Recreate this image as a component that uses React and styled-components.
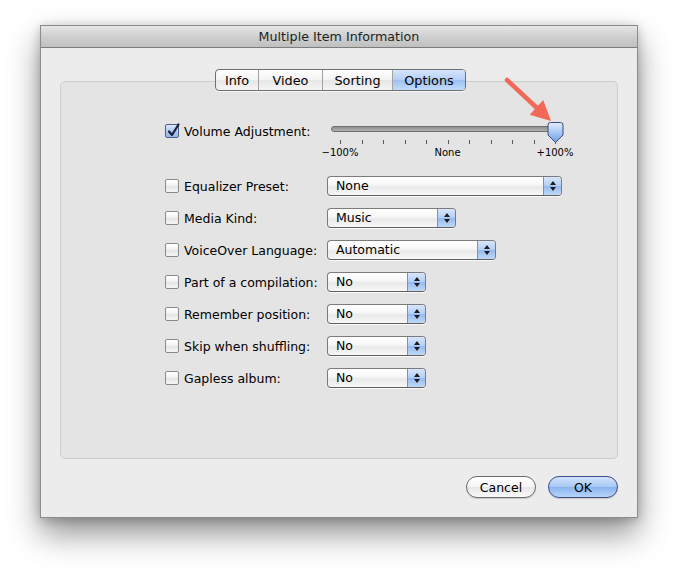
import React from "react";
import styled, { createGlobalStyle } from "styled-components";

const GlobalStyle = createGlobalStyle`
  html, body { margin: 0; padding: 0; background: #fff; }
  body { font-family: "DejaVu Sans", "Lucida Grande", sans-serif; color: #000; }
`;

const Page = styled.div`
  position: relative;
  width: 678px;
  height: 573px;
  padding: 25px 0 0 40px;
  box-sizing: border-box;
  overflow: hidden;
`;

const Window = styled.div`
  width: 598px;
  height: 493px;
  box-sizing: border-box;
  display: flex;
  flex-direction: column;
  background: #ececec;
  border: 1px solid #8c8c8c;
  box-shadow: 0 16px 30px rgba(0, 0, 0, 0.42), 0 2px 10px rgba(0, 0, 0, 0.22);
`;

const TitleBar = styled.div`
  height: 21px;
  display: flex;
  align-items: center;
  justify-content: center;
  font-size: 12.7px;
  color: #1e1e1e;
  background: linear-gradient(#e6e6e6, #cfcfcf 50%, #c0c0c0);
  border-bottom: 1px solid #7d7d7d;
`;

const Body = styled.div`
  flex: 1;
  display: flex;
  flex-direction: column;
  padding: 21px 19px 19px 19px;
`;

const TabBar = styled.div`
  align-self: center;
  position: relative;
  z-index: 1;
  display: grid;
  grid-template-columns: 42px 64px 70px 73px;
  height: 22px;
  box-sizing: border-box;
  margin-left: 3px;
  border: 1px solid #6f6f6f;
  border-radius: 4px;
  overflow: hidden;
  background: linear-gradient(#ffffff, #f3f3f3 50%, #e6e6e6 51%, #f4f4f4);
  box-shadow: 0 1px 0 rgba(255, 255, 255, 0.7);
`;

const Tab = styled.div`
  display: flex;
  align-items: center;
  justify-content: center;
  font-size: 12.8px;
  border-left: ${(p) => (p.$first ? "none" : "1px solid #a3a3a3")};
  background: ${(p) =>
    p.$active
      ? "linear-gradient(#d6e5fb, #b4cff4 50%, #9cc0f0 51%, #c3dbfa)"
      : "transparent"};
`;

const GroupBox = styled.div`
  flex: 1;
  margin-top: -10px;
  background: #e4e4e4;
  border: 1px solid #cdcdcd;
  border-radius: 5px;
  padding: 40px 0 0 104px;
  display: flex;
  flex-direction: column;
`;

const VolumeRow = styled.div`
  display: flex;
  align-items: flex-start;
  margin-bottom: 18px;
`;

const Row = styled.div`
  display: flex;
  align-items: center;
  height: 20px;
  margin-bottom: 12px;
`;

const LabelCell = styled.label`
  width: 162px;
  height: ${(p) => p.$h || 20}px;
  display: flex;
  align-items: center;
  gap: 5px;
  font-size: 12.5px;
  white-space: nowrap;
`;

const Box = styled.span`
  position: relative;
  width: 14px;
  height: 14px;
  box-sizing: border-box;
  flex: none;
  border: 1px solid #8a8a8a;
  border-radius: 2px;
  background: ${(p) =>
    p.$checked
      ? "linear-gradient(#dce8fa, #a9c7f1 55%, #93b8ee)"
      : "linear-gradient(#ffffff, #f1f1f1 50%, #e3e3e3 51%, #f5f5f5)"};
  border-color: ${(p) => (p.$checked ? "#4f5f86" : "#8a8a8a")};
  & svg {
    position: absolute;
    left: 0px;
    top: -3px;
  }
`;

const SliderWrap = styled.div`
  display: flex;
  flex-direction: column;
  width: 254px;
`;

const SliderSvg = styled.svg`
  display: block;
`;

const ScaleLabels = styled.div`
  display: grid;
  grid-template-columns: repeat(3, 40px);
  justify-content: space-between;
  width: 255px;
  margin: 2px 0 0 -7px;
  font-size: 10px;
  line-height: 10px;
  text-align: center;
`;

const Popup = styled.div`
  width: ${(p) => p.$w}px;
  height: 20px;
  box-sizing: border-box;
  display: flex;
  border: 1px solid #7b7b7b;
  border-bottom-color: #5f5f5f;
  border-radius: 4px;
  overflow: hidden;
  background: linear-gradient(#ffffff, #f7f7f7 45%, #e9e9e9 55%, #f8f8f8);
  box-shadow: 0 1px 0 rgba(255, 255, 255, 0.8);
`;

const PopupText = styled.span`
  flex: 1;
  padding-left: 8px;
  font-size: 12.5px;
  line-height: 18px;
`;

const PopupArrows = styled.span`
  width: 17px;
  flex: none;
  display: flex;
  flex-direction: column;
  align-items: center;
  justify-content: center;
  gap: 2px;
  border-left: 1px solid #7e90b8;
  background: linear-gradient(#d8e6fb, #b2cdf4 50%, #94b9ef 51%, #c0d8f8);
`;

const Tri = styled.span`
  width: 0;
  height: 0;
  border-left: 3px solid transparent;
  border-right: 3px solid transparent;
  ${(p) => (p.$up ? "border-bottom: 4px solid #1c1c1c;" : "border-top: 4px solid #1c1c1c;")}
`;

const ButtonRow = styled.div`
  display: flex;
  justify-content: flex-end;
  gap: 12px;
  margin-top: 17px;
`;

const Button = styled.div`
  width: 70px;
  height: 22px;
  box-sizing: border-box;
  display: flex;
  align-items: center;
  justify-content: center;
  border-radius: 11px;
  font-size: 12.5px;
  border: 1px solid ${(p) => (p.$primary ? "#3f4c8c" : "#6a6a6a")};
  background: ${(p) =>
    p.$primary
      ? "linear-gradient(#d2e3fb, #a7c8f3 50%, #88b4ee 51%, #b8d5f9)"
      : "linear-gradient(#ffffff, #f5f5f5 50%, #e6e6e6 51%, #fafafa)"};
  box-shadow: 0 1px 1px rgba(0, 0, 0, 0.15);
`;

const Annotation = styled.svg`
  position: absolute;
  left: 500px;
  top: 74px;
  pointer-events: none;
`;

const Checkbox = ({ checked }) => (
  <Box $checked={checked}>
    {checked && (
      <svg width="16" height="16" viewBox="0 0 16 16">
        <path d="M3 9.5 L6 13 L12.5 2.5" fill="none" stroke="#1d1f3a" strokeWidth="2.2" strokeLinecap="round" strokeLinejoin="round" />
      </svg>
    )}
  </Box>
);

const Select = ({ value, width }) => (
  <Popup $w={width}>
    <PopupText>{value}</PopupText>
    <PopupArrows>
      <Tri $up />
      <Tri />
    </PopupArrows>
  </Popup>
);

const ticks = Array.from({ length: 11 }, (_, i) => 13 + i * 21.5);

const Slider = () => (
  <SliderWrap>
    <SliderSvg width="254" height="24" viewBox="0 0 254 24">
      <defs>
        <linearGradient id="trk" x1="0" y1="0" x2="0" y2="1">
          <stop offset="0" stopColor="#8c8c8c" />
          <stop offset="1" stopColor="#b4b4b4" />
        </linearGradient>
        <linearGradient id="knb" x1="0" y1="0" x2="0" y2="1">
          <stop offset="0" stopColor="#e2ecfc" />
          <stop offset="0.5" stopColor="#a9c8f3" />
          <stop offset="1" stopColor="#6c9de4" />
        </linearGradient>
      </defs>
      <rect x="4.5" y="4.5" width="228" height="5" rx="2.5" fill="url(#trk)" stroke="#6e6e6e" />
      {ticks.map((x) => (
        <line key={x} x1={Math.round(x) + 0.5} y1="18" x2={Math.round(x) + 0.5} y2="22" stroke="#5a5a5a" />
      ))}
      <path
        d="M223.5 0.5 H233.5 Q236 0.5 236 3 V13 L228.5 20.5 L221 13 V3 Q221 0.5 223.5 0.5 Z"
        fill="url(#knb)"
        stroke="#3c4c7c"
      />
    </SliderSvg>
    <ScaleLabels>
      <span>−100%</span>
      <span>None</span>
      <span>+100%</span>
    </ScaleLabels>
  </SliderWrap>
);

const rows = [
  { label: "Equalizer Preset:", value: "None", width: 235 },
  { label: "Media Kind:", value: "Music", width: 129 },
  { label: "VoiceOver Language:", value: "Automatic", width: 169 },
  { label: "Part of a compilation:", value: "No", width: 99 },
  { label: "Remember position:", value: "No", width: 99 },
  { label: "Skip when shuffling:", value: "No", width: 99 },
  { label: "Gapless album:", value: "No", width: 99 },
];

const tabs = ["Info", "Video", "Sorting", "Options"];

export default function App() {
  return (
    <Page>
      <GlobalStyle />
      <Window>
        <TitleBar>Multiple Item Information</TitleBar>
        <Body>
          <TabBar>
            {tabs.map((t, i) => (
              <Tab key={t} $first={i === 0} $active={t === "Options"}>
                {t}
              </Tab>
            ))}
          </TabBar>
          <GroupBox>
            <VolumeRow>
              <LabelCell $h={18}>
                <Checkbox checked />
                Volume Adjustment:
              </LabelCell>
              <Slider />
            </VolumeRow>
            {rows.map((r) => (
              <Row key={r.label}>
                <LabelCell>
                  <Checkbox />
                  {r.label}
                </LabelCell>
                <Select value={r.value} width={r.width} />
              </Row>
            ))}
          </GroupBox>
          <ButtonRow>
            <Button>Cancel</Button>
            <Button $primary>OK</Button>
          </ButtonRow>
        </Body>
      </Window>
      <Annotation width="60" height="55" viewBox="0 0 60 55">
        <line x1="7" y1="6" x2="37" y2="34" stroke="#f26a57" strokeWidth="4.5" strokeLinecap="round" />
        <polygon points="51,47 29.6,40.7 43.2,26.1" fill="#f26a57" />
      </Annotation>
    </Page>
  );
}
